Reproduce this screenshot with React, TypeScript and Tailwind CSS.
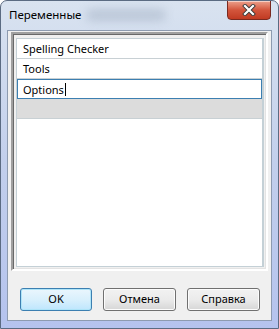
import { useState } from "react";

const rows = ["Spelling Checker", "Tools", "Options"];

export default function App() {
    const [selected] = useState(2);

    return (
        <div
            className="relative flex h-[329px] w-[279px] flex-col overflow-hidden rounded-t-[7px] border border-[#5b6b82] bg-gradient-to-b from-[#d9e3f0] via-[#c2cfec] to-[#b5c3ee] text-[11px] text-black"
            style={{ fontFamily: '"Noto Sans", "Open Sans", sans-serif' }}
        >
            {/* aero blur behind the title */}
            <div className="absolute left-[85px] top-[8px] h-[12px] w-[80px] rounded-full bg-[#a9b6c8] opacity-60 blur-[5px]" />

            {/* Title bar */}
            <div className="relative flex h-[29px] shrink-0 items-center pl-[8px] pb-[1px]">
                <span className="text-[11.5px] leading-none">Переменные</span>
                <button
                    aria-label="Close"
                    className="absolute right-[7px] top-[-1px] flex h-[20px] w-[44px] items-center justify-center rounded-b-[4px] border border-[#7a2a20] bg-gradient-to-b from-[#eba08c] via-[#d3553c] to-[#c13a22] shadow-[inset_0_1px_0_rgba(255,255,255,0.5)]"
                >
                    <svg width="14" height="12" viewBox="0 0 14 12">
                        <path
                            d="M3 2l8 8M11 2l-8 8"
                            stroke="#3a3a3a"
                            strokeWidth="4"
                            strokeLinecap="square"
                        />
                        <path
                            d="M3 2l8 8M11 2l-8 8"
                            stroke="#ffffff"
                            strokeWidth="2.2"
                            strokeLinecap="square"
                        />
                    </svg>
                </button>
            </div>

            {/* Client area */}
            <div className="mx-[6px] mb-[7px] flex flex-1 flex-col border border-[#8d9bb0] bg-[#f0f0f0]">
                {/* Sunken panel */}
                <div className="ml-[3px] mr-[3px] mt-[1px] h-[239px] border-2 border-b-white border-l-[#a0a0a0] border-r-white border-t-[#a0a0a0] pb-[2px] pl-[3px] pr-[2px] pt-[4px] shadow-[inset_1px_1px_0_#696969,inset_-1px_-1px_0_#e3e3e3]">
                    <div className="h-full border border-r-2 border-[#c4d0d6] bg-white">
                        {rows.map((r, i) =>
                            i === selected ? (
                                <div
                                    key={r}
                                    className="flex h-[20px] items-center border border-[#3c7fb1] pl-[5px]"
                                >
                                    <span className="leading-none">{r}</span>
                                    <span className="ml-[1px] h-[13px] w-px bg-black" />
                                </div>
                            ) : (
                                <div
                                    key={r}
                                    className="flex h-[20px] items-center border-b border-[#c8d0d4] pl-[6px]"
                                >
                                    <span className="leading-none">{r}</span>
                                </div>
                            )
                        )}
                        <div className="h-[20px] border-b border-[#c8d0d4] bg-[#dcdcdc]" />
                    </div>
                </div>

                {/* Buttons */}
                <div className="mt-[17px] flex gap-[11px] pl-[12px]">
                    <button className="h-[23px] w-[72px] rounded-[3px] border border-[#3c7fb1] bg-gradient-to-b from-[#eaf6fd] via-[#d9f0fc] to-[#bee6fd] shadow-[inset_0_0_0_1px_#aee4f8]">
                        OK
                    </button>
                    <button className="h-[23px] w-[73px] rounded-[3px] border border-[#707070] bg-gradient-to-b from-[#f2f2f2] via-[#ebebeb] to-[#d6d6d6] shadow-[inset_0_0_0_1px_#fcfcfc]">
                        Отмена
                    </button>
                    <button className="h-[23px] w-[73px] rounded-[3px] border border-[#707070] bg-gradient-to-b from-[#f2f2f2] via-[#ebebeb] to-[#d6d6d6] shadow-[inset_0_0_0_1px_#fcfcfc]">
                        Справка
                    </button>
                </div>
            </div>
        </div>
    );
}
